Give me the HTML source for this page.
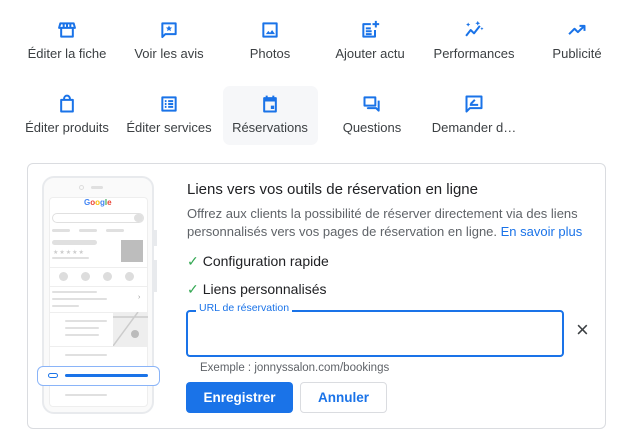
<!DOCTYPE html>
<html><head><meta charset="utf-8"><style>
*{margin:0;padding:0;box-sizing:border-box}
body{width:630px;height:446px;background:#fff;font-family:"Liberation Sans",Arial,sans-serif;position:relative;overflow:hidden;color:#3c4043}
.it{position:absolute;width:100px;text-align:center;font-size:13px;color:#3c4043}
.it svg{position:absolute;left:40px;top:20px;width:20px;height:20px;fill:none;stroke:#1a73e8;stroke-width:2.4;stroke-linejoin:round}
.it svg .f{fill:#1a73e8;stroke:none}
.it span{position:absolute;left:-10px;right:-10px;white-space:nowrap;top:46px}
.abs{position:absolute}
.g{background:#e0e0e0;border-radius:2px;position:absolute;height:3px}
</style></head><body>
<div class="abs" style="left:223px;top:86px;width:95px;height:59px;background:#f6f7f9;border-radius:7px"></div>

<div class="it" style="left:17px;top:0"><svg viewBox="0 0 24 24"><path d="M4 4h16l1.5 5.5H2.5zM5 10v10h14V10M8 4.5v5M12 4.5v5M16 4.5v5"/></svg><span>Éditer la fiche</span></div>
<div class="it" style="left:119px;top:0"><svg viewBox="0 0 24 24"><path d="M4 4h16v13H7.5L4 20.5z"/><path class="f" d="M12 6.5l1.1 2.4 2.6.2-2 1.7.6 2.6-2.3-1.4-2.3 1.4.6-2.6-2-1.7 2.6-.2z"/></svg><span>Voir les avis</span></div>
<div class="it" style="left:220px;top:0"><svg viewBox="0 0 24 24"><path d="M4 4h16v16H4z"/><path class="f" d="M7 17l3-4 2 2.5 2.5-3.5 3.5 5z"/></svg><span>Photos</span></div>
<div class="it" style="left:320px;top:0"><svg viewBox="0 0 24 24"><path d="M13 5H4v15h14v-8M19 1v8M15 5h8M7 10h6M7 13.5h7M7 17h7"/></svg><span>Ajouter actu</span></div>
<div class="it" style="left:424px;top:0"><svg viewBox="0 0 24 24"><path d="M2.5 19l5.5-7 4 4 7-9"/><path class="f" d="M5 3l.8 1.7L7.5 5.5l-1.7.8L5 8l-.8-1.7-1.7-.8 1.7-.8zm11.5-2 .9 2 2 .9-2 .9-.9 2-.9-2-2-.9 2-.9zM21.5 8.5l.6 1.3 1.3.6-1.3.6-.6 1.3-.6-1.3-1.3-.6 1.3-.6z"/></svg><span>Performances</span></div>
<div class="it" style="left:527px;top:0"><svg viewBox="0 0 24 24"><path d="M2.5 17l6.5-6.5 4 4L21 7M15 7h6v6"/></svg><span>Publicité</span></div>

<div class="it" style="left:17px;top:74px"><svg viewBox="0 0 24 24"><path d="M5 7h14v14H5zM8.5 7V5.5a3.5 3.5 0 0 1 7 0V7"/></svg><span>Éditer produits</span></div>
<div class="it" style="left:119px;top:74px"><svg viewBox="0 0 24 24"><path d="M4 4h16v16H4zM7 8.5h2M11 8.5h6M7 12h2M11 12h6M7 15.5h2M11 15.5h6"/></svg><span>Éditer services</span></div>
<div class="it" style="left:220px;top:74px"><svg viewBox="0 0 24 24"><path d="M5 5h14v16H5zM8 2v4M16 2v4"/><path class="f" d="M5 5h14v4H5zM13 14h4v4h-4z"/></svg><span>Réservations</span></div>
<div class="it" style="left:322px;top:74px"><svg viewBox="0 0 24 24"><path d="M3 4h13v10H3zM20 8v12l-3-3H7v-1"/></svg><span>Questions</span></div>
<div class="it" style="left:424px;top:74px"><svg viewBox="0 0 24 24"><path d="M3 3h18v14H7l-4 4zM7 13h10M8 12l5-5"/></svg><span>Demander d…</span></div>

<div class="abs" style="left:27px;top:163px;width:579px;height:266px;border:1px solid #dadce0;border-radius:6px"></div>

<div class="abs" style="left:42px;top:176px;width:112px;height:238px;border:2px solid #e8eaed;border-radius:12px;background:#fafafa"></div>
<div class="abs" style="left:154px;top:230px;width:3px;height:16px;background:#e8eaed"></div>
<div class="abs" style="left:154px;top:260px;width:3px;height:32px;background:#e8eaed"></div>
<div class="abs" style="left:79px;top:185px;width:5px;height:5px;border:1px solid #ddd;border-radius:50%"></div>
<div class="g" style="left:91px;top:186px;width:12px"></div>
<div class="abs" style="left:49px;top:197px;width:99px;height:210px;background:#fff;border:1px solid #eee;border-radius:4px"></div>
<div class="abs" style="left:84px;top:198px;font-size:8px;font-weight:bold"><span style="color:#4285f4">G</span><span style="color:#ea4335">o</span><span style="color:#fbbc05">o</span><span style="color:#4285f4">g</span><span style="color:#34a853">l</span><span style="color:#ea4335">e</span></div>
<div class="abs" style="left:52px;top:213px;width:92px;height:10px;border:1px solid #e0e0e0;border-radius:5px"></div>
<div class="abs" style="left:134px;top:214px;width:9px;height:8px;background:#e0e0e0;border-radius:4px"></div>
<div class="g" style="left:52px;top:229px;width:18px"></div><div class="g" style="left:79px;top:229px;width:18px"></div><div class="g" style="left:106px;top:229px;width:18px"></div>
<div class="g" style="left:52px;top:240px;width:45px;height:5px;border-radius:3px"></div>
<div class="abs" style="left:53px;top:249px;font-size:6px;color:#ccc;letter-spacing:1px">★★★★★</div>
<div class="g" style="left:52px;top:257px;width:37px;height:2px"></div>
<div class="abs" style="left:121px;top:240px;width:22px;height:22px;background:#bdbdbd"></div>
<div class="abs" style="left:49px;top:267px;width:99px;height:1px;background:#eee"></div>
<div class="abs" style="left:59px;top:272px;width:9px;height:9px;background:#ddd;border-radius:50%"></div>
<div class="abs" style="left:81px;top:272px;width:9px;height:9px;background:#ddd;border-radius:50%"></div>
<div class="abs" style="left:103px;top:272px;width:9px;height:9px;background:#ddd;border-radius:50%"></div>
<div class="abs" style="left:125px;top:272px;width:9px;height:9px;background:#ddd;border-radius:50%"></div>
<div class="abs" style="left:49px;top:286px;width:99px;height:1px;background:#eee"></div>
<div class="g" style="left:52px;top:291px;width:45px;height:2px"></div>
<div class="g" style="left:52px;top:298px;width:55px;height:2px"></div>
<div class="g" style="left:52px;top:305px;width:27px;height:2px"></div>
<div class="abs" style="left:138px;top:294px;font-size:7px;color:#999">›</div>
<div class="abs" style="left:49px;top:312px;width:99px;height:1px;background:#eee"></div>
<div class="g" style="left:65px;top:320px;width:42px;height:2px"></div>
<div class="g" style="left:65px;top:327px;width:34px;height:2px"></div>
<div class="g" style="left:65px;top:334px;width:34px;height:2px"></div>
<div class="abs" style="left:113px;top:312px;width:35px;height:34px;background:#eeeeee"></div>
<svg class="abs" style="left:113px;top:312px" width="35" height="34"><path d="M0 34 L25 0 M0 5 L35 5" stroke="#ccc" stroke-width="1.5"/><circle cx="22" cy="22" r="4" fill="#bbb"/></svg>
<div class="abs" style="left:49px;top:346px;width:99px;height:1px;background:#eee"></div>
<div class="g" style="left:65px;top:354px;width:42px;height:2px"></div>
<div class="abs" style="left:37px;top:366px;width:123px;height:20px;border:1px solid #8ab4f8;border-radius:6px;background:#fff"></div>
<div class="abs" style="left:48px;top:373px;width:10px;height:5px;border:1.5px solid #1a73e8;border-radius:3px"></div>
<div class="abs" style="left:65px;top:374px;width:83px;height:3px;background:#1a73e8;border-radius:2px"></div>
<div class="g" style="left:65px;top:394px;width:42px;height:2px"></div>

<div class="abs" style="left:187px;top:181px;font-size:15px;color:#202124">Liens vers vos outils de réservation en ligne</div>
<div class="abs" style="left:187px;top:205px;font-size:13px;line-height:18px;color:#5f6368;width:400px">Offrez aux clients la possibilité de réserver directement via des liens personnalisés vers vos pages de réservation en ligne. <span style="color:#1a73e8">En savoir plus</span></div>
<div class="abs" style="left:187px;top:253px;font-size:14px;color:#202124"><span style="color:#34a853;margin-right:4px">✓</span>Configuration rapide</div>
<div class="abs" style="left:187px;top:281px;font-size:14px;color:#202124"><span style="color:#34a853;margin-right:4px">✓</span>Liens personnalisés</div>
<div class="abs" style="left:186px;top:310px;width:378px;height:47px;border:2px solid #1a73e8;border-radius:4px"></div>
<div class="abs" style="left:196px;top:302px;font-size:10.5px;color:#1a73e8;background:#fff;padding:0 3px">URL de réservation</div>
<div class="abs" style="left:576px;top:317px;font-size:22px;color:#3c4043">×</div>
<div class="abs" style="left:200px;top:362px;font-size:11.5px;color:#5f6368">Exemple : jonnyssalon.com/bookings</div>
<div class="abs" style="left:186px;top:382px;width:107px;height:31px;background:#1a73e8;border-radius:4px;color:#fff;font-size:13.5px;font-weight:bold;text-align:center;line-height:31px">Enregistrer</div>
<div class="abs" style="left:300px;top:382px;width:87px;height:31px;border:1px solid #dadce0;border-radius:4px;color:#1a73e8;font-size:13.5px;font-weight:bold;text-align:center;line-height:29px">Annuler</div>
</body></html>
